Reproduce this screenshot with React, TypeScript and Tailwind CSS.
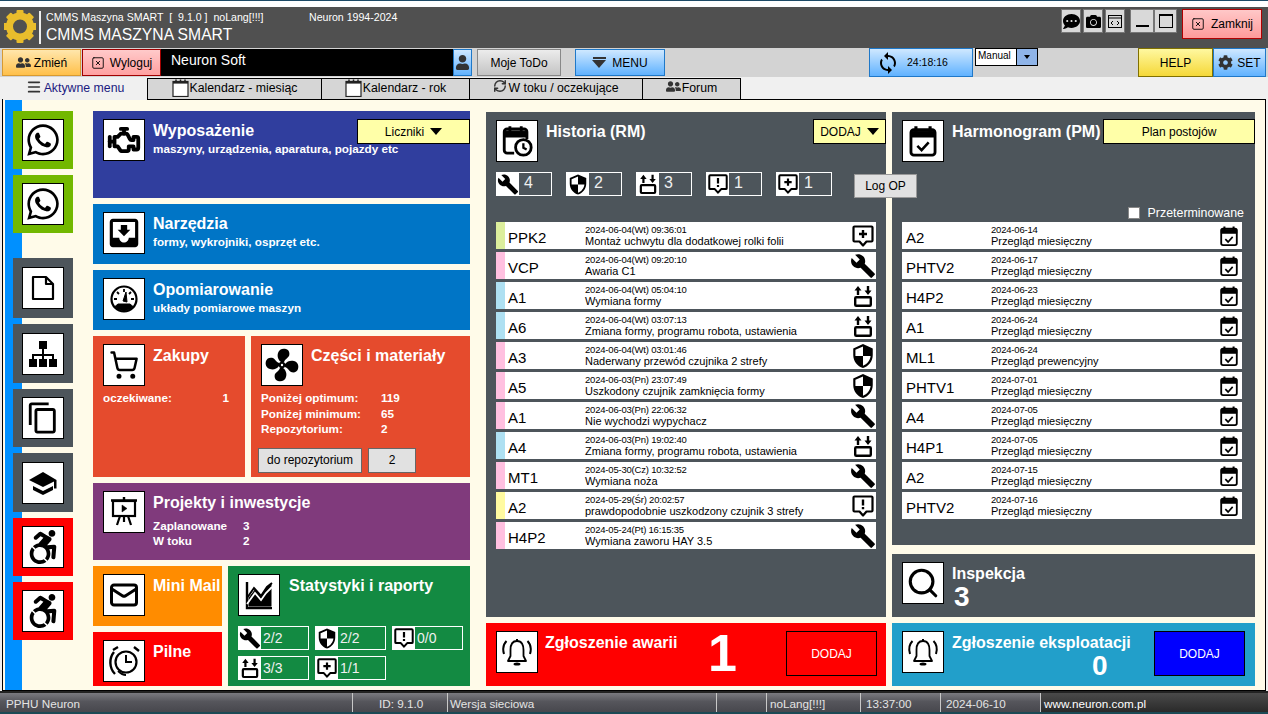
import type { ReactNode } from 'react';
import { Mail, Menu, RefreshCw, Search, ShoppingCart, SquareX } from 'lucide-react';
import { FaAccessibleIcon, FaCamera, FaCog, FaCommentDots, FaUser, FaUserFriends, FaWhatsapp } from 'react-icons/fa';
import { MdBuild, MdMoveToInbox, MdOutlineContentCopy, MdSecurity, MdSync } from 'react-icons/md';
import { TbEngine } from 'react-icons/tb';

const FormChange = ({ size = 24 }: { size?: number }) => (
  <svg width={size} height={size} viewBox="0 0 24 24">
    <path d="M7 2l3.500 4.500H8.200V11H5.800V6.500H3.500zM17 11l-3.500-4.500h2.300V2h2.400v4.500h2.300z" fill="#000" />
    <rect x="4.200" y="13.200" width="15.600" height="8.600" rx="1" fill="none" stroke="#000" strokeWidth="2.400" />
  </svg>
);

const Bubble = ({ size = 24, kind }: { size?: number; kind: 'alert' | 'plus' }) => (
  <svg width={size} height={size} viewBox="0 0 24 24" fill="none" stroke="#000" strokeWidth="2.200">
    <path d="M3.500 2.500h17a1 1 0 0 1 1 1v13a1 1 0 0 1-1 1H15.500L12 21.500 8.500 17.500H3.500a1 1 0 0 1-1-1v-13a1 1 0 0 1 1-1z" strokeLinejoin="round" />
    {kind === 'alert' ? (
      <path d="M12 5.500v6M12 13v2.200" strokeWidth="2.400" />
    ) : (
      <path d="M12 6v8M8 10h8" strokeWidth="2.400" />
    )}
  </svg>
);

const CalendarCheck = ({ size = 24 }: { size?: number }) => (
  <svg width={size} height={size} viewBox="0 0 24 24" fill="none" stroke="#000">
    <path d="M7 1.500v4M17 1.500v4" strokeWidth="2.200" />
    <rect x="3.500" y="4" width="17" height="18" rx="2" strokeWidth="2" />
    <path d="M3.500 5h17v4h-17z" fill="#000" strokeWidth="1" />
    <path d="M8 15.500l3 3 5-5.500" strokeWidth="1.800" />
  </svg>
);

const CalendarClock = ({ size = 32 }: { size?: number }) => (
  <svg width={size} height={size} viewBox="0 0 24 24" fill="none" stroke="#000">
    <path d="M7 1.500v4M15 1.500v4" strokeWidth="2" />
    <path d="M10 20.500H5a2 2 0 0 1-2-2V5.500a2 2 0 0 1 2-2h12a2 2 0 0 1 2 2v5" strokeWidth="2" />
    <path d="M3 5h16v4H3z" fill="#000" strokeWidth="1" />
    <circle cx="16.500" cy="16.500" r="5.500" fill="#fff" strokeWidth="2" />
    <path d="M16.500 13.500v3.300l2.300 1.200" strokeWidth="1.600" />
  </svg>
);

const TabCalendar = () => (
  <svg width={17} height={18} viewBox="0 0 17 18" fill="none" stroke="#222">
    <path d="M4 0.500v4M8.500 0.500v4M13 0.500v4" strokeWidth="1.500" />
    <rect x="1" y="2.500" width="15" height="15" fill="#fff" strokeWidth="1.200" />
    <path d="M1 3.500h15" strokeWidth="2.200" />
  </svg>
);

const Gauge = () => (
  <svg width={30} height={30} viewBox="0 0 30 30" fill="none" stroke="#000">
    <circle cx="15" cy="15" r="12.500" strokeWidth="2.200" />
    <path d="M6 22.500a12 12 0 0 0 18 0l-3-2.500H9z" fill="#000" strokeWidth="1" />
    <path d="M15 5v3M8 8l2 2M22 8l-2 2M5 15h3M25 15h-3" strokeWidth="1.800" />
    <path d="M14 17l3-9 1 10z" fill="#000" strokeWidth="1" />
  </svg>
);

const Easel = () => (
  <svg width={30} height={32} viewBox="0 0 30 32" fill="none" stroke="#000">
    <path d="M15 1v3M2 4.500h26" strokeWidth="2.400" />
    <rect x="4" y="5" width="22" height="15" strokeWidth="2.200" />
    <path d="M13 9l5 3.500-5 3.500z" fill="#000" strokeWidth="0.500" />
    <path d="M11 20l-3 9M19 20l3 9M15 20v6" strokeWidth="2.200" />
  </svg>
);

const AreaChartIcon = () => (
  <svg width={30} height={30} viewBox="0 0 30 30" fill="none" stroke="#000">
    <path d="M3 2v26h25" strokeWidth="2.400" />
    <path d="M5 26V18l6-8 6 7 5-8 5-5v22z" fill="#000" strokeWidth="1" />
    <path d="M3 24L11 13l6 7 5-7 6-6" stroke="#fff" strokeWidth="1.800" />
    <path d="M3 18L10 8l7 8 6-9 5-4" strokeWidth="2" />
  </svg>
);

const Cap = () => (
  <svg width={30} height={30} viewBox="0 0 30 30">
    <path d="M15 4L1 12l14 7 11-5.500v7h2.500V12z" fill="#000" />
    <path d="M5 18v4l10 5 10-5v-4l-10 5z" fill="#000" />
  </svg>
);

const PageIcon = () => (
  <svg width={26} height={26} viewBox="0 0 26 26" fill="none" stroke="#000" strokeWidth="2.200" strokeLinejoin="round">
    <path d="M3 2h13l7 7v15H3z" />
    <path d="M16 2v7h7" />
  </svg>
);

const TreeIcon = () => (
  <svg width={30} height={30} viewBox="0 0 30 30">
    <rect x="11" y="2" width="8" height="8" />
    <path d="M14 10h2v5h10v5h-2v-3H16v3h-2v-3H6v3H4v-5h10z" />
    <rect x="1" y="20" width="8" height="8" />
    <rect x="11" y="20" width="8" height="8" />
    <rect x="21" y="20" width="8" height="8" />
  </svg>
);

const FanIcon = () => (
  <svg width={36} height={36} viewBox="0 0 36 36">
    {[0, 90, 180, 270].map((a) => (
      <path key={a} transform={`rotate(${a} 18 18)`} d="M17 15c-3-2-4-6-3-9 1-4 5-5 8-4 3 1 4 4 3 7-1 2-4 3-5 6z" />
    ))}
    <circle cx="18" cy="18" r="3.200" />
    <circle cx="18" cy="18" r="1.200" fill="#fff" />
  </svg>
);

const ClockIcon = () => (
  <svg width={36} height={36} viewBox="0 0 36 36" fill="none" stroke="#000">
    <circle cx="20" cy="19" r="10.500" strokeWidth="2.200" />
    <path d="M20 12v7h6" strokeWidth="2" />
    <path d="M8 9C3 15 3 25 9 31" strokeWidth="2.400" />
    <path d="M12 28c2 2 5 4 8 4" strokeWidth="1.800" />
    <path d="M12 4L7 7M28 4l5 4" strokeWidth="2.400" />
  </svg>
);

const BellIcon = () => (
  <svg width={34} height={36} viewBox="0 0 34 36" fill="none" stroke="#000">
    <path d="M17 5v2" strokeWidth="2" />
    <path d="M17 7c-5 0-6.500 4.500-6.500 9v6L8 27h18l-2.500-5v-6c0-4.500-1.500-9-6.500-9z" strokeWidth="1.800" strokeLinejoin="round" />
    <ellipse cx="17" cy="30" rx="3.500" ry="1.600" fill="#000" stroke="none" />
    <path d="M6.500 7C3.500 10 2.500 15 4 20M27.500 7c3 3 4 8 2.500 13" strokeWidth="2" />
  </svg>
);

const LogoGear = () => (
  <svg width={32} height={35} viewBox="0 0 32 35" fill="#e9bd2c">
    {[0, 45, 90, 135, 180, 225, 270, 315].map((a) => (
      <rect key={a} x="12.500" y="1" width="7" height="8" rx="1" transform={`rotate(${a} 16 17.500)`} />
    ))}
    <circle cx="16" cy="17.500" r="10.500" fill="none" stroke="#e9bd2c" strokeWidth="7" />
  </svg>
);

const IconBox = ({ children }: { children: ReactNode }) => (
  <div className="flex h-[42px] w-[42px] shrink-0 items-center justify-center border border-black bg-white text-black">
    {children}
  </div>
);

const SideTile = ({ color, h, children }: { color: string; h: string; children: ReactNode }) => (
  <div className={`flex w-[60px] items-center justify-center ${color} ${h}`}>
    <IconBox>{children}</IconBox>
  </div>
);

const Sidebar = () => (
  <div className="flex w-[90px] shrink-0 flex-col bg-[linear-gradient(90deg,transparent_2px,#0090ff_2px,#0090ff_19px,transparent_19px)] pl-[10px] pt-[11px]">
    <SideTile color="bg-[#72b800]" h="h-[58px]"><FaWhatsapp size={36} /></SideTile>
    <div className="mt-[6px]"><SideTile color="bg-[#72b800]" h="h-[58px]"><FaWhatsapp size={36} /></SideTile></div>
    <div className="mt-[25px] flex flex-col gap-[6px]">
      <SideTile color="bg-[#4d555b]" h="h-[60px]"><PageIcon /></SideTile>
      <SideTile color="bg-[#4d555b]" h="h-[59px]"><TreeIcon /></SideTile>
      <SideTile color="bg-[#4d555b]" h="h-[58px]"><MdOutlineContentCopy size={34} /></SideTile>
      <SideTile color="bg-[#4d555b]" h="h-[59px]"><Cap /></SideTile>
      <SideTile color="bg-[#ff0000]" h="h-[58px]"><FaAccessibleIcon size={34} /></SideTile>
      <SideTile color="bg-[#ff0000]" h="h-[58px]"><FaAccessibleIcon size={34} /></SideTile>
    </div>
  </div>
);

const YellowButton = ({ w, children }: { w: string; children: ReactNode }) => (
  <button className={`flex h-[25px] items-center justify-center gap-[6px] border border-black bg-[#ffffa8] text-[12px] text-black ${w}`}>
    {children}
  </button>
);

const DownCaret = () => <span className="h-0 w-0 border-x-[6px] border-t-[7px] border-x-transparent border-t-black" />;

const Chip = ({ icon, value, w, big }: { icon: ReactNode; value: string; w: string; big?: boolean }) => (
  <div className={`flex h-[24px] border border-white ${w}`}>
    <div className="flex w-[22px] shrink-0 items-center justify-center bg-white text-black">{icon}</div>
    <span className={big ? 'pl-[5px] text-[16px] leading-[20px] text-[#f0f0f0]' : 'pl-[2px] text-[14px] leading-[22px] text-[#f0f0f0]'}>{value}</span>
  </div>
);

const LeftColumn = () => (
  <div className="flex w-[377px] shrink-0 flex-col gap-[6px] pt-[11px] text-white">
    <div className="flex h-[87px] bg-[#303e9e] pl-[10px] pt-[8px]">
      <IconBox><TbEngine size={38} strokeWidth={2.400} /></IconBox>
      <div className="ml-[8px] w-[204px] whitespace-nowrap pt-[3px]">
        <div className="text-[16px] font-bold leading-[18px]">Wyposażenie</div>
        <div className="text-[11.700px] font-bold leading-[18px]">maszyny, urządzenia, aparatura, pojazdy etc</div>
      </div>
      <div className="ml-auto"><YellowButton w="w-[113px]">Liczniki <DownCaret /></YellowButton></div>
    </div>
    {[
      { title: 'Narzędzia', sub: 'formy, wykrojniki, osprzęt etc.', icon: <MdMoveToInbox size={38} /> },
      { title: 'Opomiarowanie', sub: 'układy pomiarowe maszyn', icon: <Gauge /> },
    ].map((c) => (
      <div key={c.title} className="flex h-[60px] bg-[#0075c6] pl-[10px] pt-[8px]">
        <IconBox>{c.icon}</IconBox>
        <div className="ml-[8px] pt-[3px]">
          <div className="text-[16px] font-bold leading-[18px]">{c.title}</div>
          <div className="text-[11.700px] font-bold leading-[18px]">{c.sub}</div>
        </div>
      </div>
    ))}
    <div className="flex h-[141px] gap-[6px]">
      <div className="w-[152px] bg-[#e54b2d] pl-[10px] pt-[8px]">
        <div className="flex">
          <IconBox><ShoppingCart size={30} strokeWidth={2} /></IconBox>
          <div className="ml-[8px] pt-[3px] text-[16px] font-bold leading-[18px]">Zakupy</div>
        </div>
        <div className="mt-[4px] flex w-[126px] justify-between text-[11.700px] font-bold leading-[16px]">
          <span>oczekiwane:</span><span>1</span>
        </div>
      </div>
      <div className="flex-1 bg-[#e54b2d] pl-[10px] pt-[8px]">
        <div className="flex">
          <IconBox><FanIcon /></IconBox>
          <div className="ml-[8px] pt-[3px] text-[16px] font-bold leading-[18px]">Części i materiały</div>
        </div>
        <div className="mt-[4px] grid grid-cols-[120px_1fr] text-[11.700px] font-bold leading-[15.500px]">
          <span>Poniżej optimum:</span><span>119</span>
          <span>Poniżej minimum:</span><span>65</span>
          <span>Repozytorium:</span><span>2</span>
        </div>
        <div className="-ml-[3px] mt-[11px] flex gap-[6px] text-[12px] text-black">
          <button className="h-[25px] w-[104px] border border-[#666] bg-[#e1e1e1]">do repozytorium</button>
          <button className="h-[25px] w-[48px] border border-[#666] bg-[#e1e1e1]">2</button>
        </div>
      </div>
    </div>
    <div className="flex h-[77px] bg-[#803a7c] pl-[10px] pt-[8px]">
      <IconBox><Easel /></IconBox>
      <div className="ml-[8px] pt-[3px]">
        <div className="text-[16px] font-bold leading-[18px]">Projekty i inwestycje</div>
        <div className="mt-[6px] grid grid-cols-[90px_1fr] text-[11.700px] font-bold leading-[15px]">
          <span>Zaplanowane</span><span>3</span>
          <span>W toku</span><span>2</span>
        </div>
      </div>
    </div>
    <div className="flex h-[120px] gap-[6px]">
      <div className="flex w-[129px] flex-col gap-[6px]">
        <div className="flex h-[60px] bg-[#ff8c00] pl-[10px] pt-[8px]">
          <IconBox><Mail size={30} strokeWidth={2.400} /></IconBox>
          <div className="ml-[8px] whitespace-nowrap pt-[3px] text-[16px] font-bold leading-[18px]">Mini Mail</div>
        </div>
        <div className="flex h-[54px] bg-[#ff0000] pl-[10px] pt-[8px]">
          <IconBox><ClockIcon /></IconBox>
          <div className="ml-[8px] pt-[3px] text-[16px] font-bold leading-[18px]">Pilne</div>
        </div>
      </div>
      <div className="flex-1 bg-[#138a42] pl-[10px] pt-[8px]">
        <div className="flex">
          <IconBox><AreaChartIcon /></IconBox>
          <div className="ml-[9px] pt-[3px] text-[16px] font-bold leading-[18px]">Statystyki i raporty</div>
        </div>
        <div className="mt-[10px] grid w-[225px] grid-cols-3 gap-x-[6px] gap-y-[6px]">
          <Chip w="w-[71px]" icon={<MdBuild size={23} />} value="2/2" />
          <Chip w="w-[71px]" icon={<MdSecurity size={23} />} value="2/2" />
          <Chip w="w-[71px]" icon={<Bubble size={22} kind="alert" />} value="0/0" />
          <Chip w="w-[71px]" icon={<FormChange size={22} />} value="3/3" />
          <Chip w="w-[71px]" icon={<Bubble size={22} kind="plus" />} value="1/1" />
        </div>
      </div>
    </div>
  </div>
);

type Kind = 'plus' | 'wrench' | 'form' | 'shield' | 'alert';

const history: { code: string; color: string; date: string; text: string; kind: Kind }[] = [
  { code: 'PPK2', color: 'bg-[#dcee9c]', date: '2024-06-04(Wt) 09:36:01', text: 'Montaż uchwytu dla dodatkowej rolki folii', kind: 'plus' },
  { code: 'VCP', color: 'bg-[#ffc0e0]', date: '2024-06-04(Wt) 09:20:10', text: 'Awaria C1', kind: 'wrench' },
  { code: 'A1', color: 'bg-[#aee0f2]', date: '2024-06-04(Wt) 05:04:10', text: 'Wymiana formy', kind: 'form' },
  { code: 'A6', color: 'bg-[#aee0f2]', date: '2024-06-04(Wt) 03:07:13', text: 'Zmiana formy, programu robota, ustawienia', kind: 'form' },
  { code: 'A3', color: 'bg-[#ffc0e0]', date: '2024-06-04(Wt) 03:01:46', text: 'Naderwany przewód czujnika 2 strefy', kind: 'shield' },
  { code: 'A5', color: 'bg-[#ffc0e0]', date: '2024-06-03(Pn) 23:07:49', text: 'Uszkodony czujnik zamknięcia formy', kind: 'shield' },
  { code: 'A1', color: 'bg-[#ffc0e0]', date: '2024-06-03(Pn) 22:06:32', text: 'Nie wychodzi wypychacz', kind: 'wrench' },
  { code: 'A4', color: 'bg-[#aee0f2]', date: '2024-06-03(Pn) 19:02:40', text: 'Zmiana formy, programu robota, ustawienia', kind: 'form' },
  { code: 'MT1', color: 'bg-[#ffc0e0]', date: '2024-05-30(Cz) 10:32:52', text: 'Wymiana noża', kind: 'wrench' },
  { code: 'A2', color: 'bg-[#fffaa0]', date: '2024-05-29(Śr) 20:02:57', text: 'prawdopodobnie uszkodzony czujnik 3 strefy', kind: 'alert' },
  { code: 'H4P2', color: 'bg-[#ffc0e0]', date: '2024-05-24(Pt) 16:15:35', text: 'Wymiana zaworu HAY 3.5', kind: 'wrench' },
];

const schedule = [
  { code: 'A2', date: '2024-06-14', text: 'Przegląd miesięczny' },
  { code: 'PHTV2', date: '2024-06-17', text: 'Przegląd miesięczny' },
  { code: 'H4P2', date: '2024-06-23', text: 'Przegląd miesięczny' },
  { code: 'A1', date: '2024-06-24', text: 'Przegląd miesięczny' },
  { code: 'ML1', date: '2024-06-24', text: 'Przegląd prewencyjny' },
  { code: 'PHTV1', date: '2024-07-01', text: 'Przegląd miesięczny' },
  { code: 'A4', date: '2024-07-05', text: 'Przegląd miesięczny' },
  { code: 'H4P1', date: '2024-07-05', text: 'Przegląd miesięczny' },
  { code: 'A2', date: '2024-07-15', text: 'Przegląd miesięczny' },
  { code: 'PHTV2', date: '2024-07-16', text: 'Przegląd miesięczny' },
];

const KindIcon = ({ kind }: { kind: Kind }) => {
  if (kind === 'wrench') return <MdBuild size={26} />;
  if (kind === 'shield') return <MdSecurity size={26} />;
  if (kind === 'form') return <FormChange size={24} />;
  return <Bubble size={24} kind={kind} />;
};

const Row = ({ code, color, date, text, icon, textX }: { code: string; color?: string; date: string; text: string; icon: ReactNode; textX: string }) => (
  <div className="flex h-[27px] bg-white text-black">
    {color && <div className={`w-[9px] shrink-0 ${color}`} />}
    <div className={`shrink-0 pl-[3px] pt-[5px] text-[15px] leading-[22px] ${textX}`}>{code}</div>
    <div className="flex-1 pt-[2px]">
      <div className="text-[9.500px] leading-[11px] tracking-[-0.2px]">{date}</div>
      <div className="text-[11px] leading-[12px]">{text}</div>
    </div>
    <div className="flex w-[26px] shrink-0 items-center justify-center">{icon}</div>
  </div>
);

const HistoryPanel = () => (
  <div className="relative flex h-[505px] flex-col bg-[#4d555b] pl-[10px] pr-[10px] pt-[8px] text-white">
    <div className="flex">
      <IconBox><CalendarClock size={34} /></IconBox>
      <div className="ml-[8px] pt-[3px] text-[16px] font-bold leading-[18px]">Historia (RM)</div>
      <div className="-mr-[10px] -mt-[1px] ml-auto"><YellowButton w="w-[73px]">DODAJ <DownCaret /></YellowButton></div>
    </div>
    <div className="mt-[10px] flex gap-[14px]">
      <Chip big w="w-[56px]" icon={<MdBuild size={23} />} value="4" />
      <Chip big w="w-[56px]" icon={<MdSecurity size={23} />} value="2" />
      <Chip big w="w-[56px]" icon={<FormChange size={22} />} value="3" />
      <Chip big w="w-[56px]" icon={<Bubble size={22} kind="alert" />} value="1" />
      <Chip big w="w-[56px]" icon={<Bubble size={22} kind="plus" />} value="1" />
    </div>
    <button className="absolute left-[368px] top-[62px] h-[24px] w-[63px] border border-[#999] bg-[#e1e1e1] text-[12px] text-black">Log OP</button>
    <div className="mt-[26px] flex flex-col gap-[3px]">
      {history.map((r) => (
        <Row key={r.date} code={r.code} color={r.color} date={r.date} text={r.text} textX="w-[80px]" icon={<KindIcon kind={r.kind} />} />
      ))}
    </div>
  </div>
);

const SchedulePanel = () => (
  <div className="flex h-[433px] flex-col bg-[#4d555b] pl-[10px] pt-[8px] text-white">
    <div className="flex">
      <IconBox><CalendarCheck size={34} /></IconBox>
      <div className="ml-[8px] pt-[3px] text-[16px] font-bold leading-[18px]">Harmonogram (PM)</div>
      <div className="-mt-[1px] ml-auto"><YellowButton w="w-[152px]">Plan postojów</YellowButton></div>
    </div>
    <div className="mr-[11px] mt-[45px] flex h-[12px] items-center justify-end gap-[8px] text-[12.400px]">
      <span className="h-[12px] w-[12px] border border-[#888] bg-white" />
      <span>Przeterminowane</span>
    </div>
    <div className="mr-[13px] mt-[3px] flex flex-col gap-[3px]">
      {schedule.map((r) => (
        <Row key={r.code + r.date} code={r.code} date={r.date} text={r.text} textX="w-[89px] pl-[4px]" icon={<CalendarCheck size={22} />} />
      ))}
    </div>
  </div>
);

const DodajBox = ({ color }: { color: string }) => (
  <button className={`h-[45px] w-[91px] border border-black text-[12px] text-white ${color}`}>DODAJ</button>
);

const Content = () => (
  <div className="flex flex-1 bg-[#fffbe9]">
    <Sidebar />
    <LeftColumn />
    <div className="ml-[16px] flex w-[400px] shrink-0 flex-col gap-[6px] pt-[12px]">
      <HistoryPanel />
      <div className="flex h-[63px] bg-[#ff0000] pl-[10px] pt-[8px] text-white">
        <IconBox><BellIcon /></IconBox>
        <div className="ml-[7px] w-[163px] pt-[3px] text-[16px] font-bold leading-[18px]">Zgłoszenie awarii</div>
        <div className="w-[78px] text-[52px] font-bold leading-[44px]">1</div>
        <DodajBox color="bg-[#ff0000]" />
      </div>
    </div>
    <div className="ml-[6px] flex w-[363px] shrink-0 flex-col pt-[12px]">
      <SchedulePanel />
      <div className="mt-[9px] flex h-[63px] bg-[#4d555b] pl-[10px] pt-[8px] text-white">
        <IconBox><Search size={34} strokeWidth={2.200} /></IconBox>
        <div className="ml-[8px] pt-[2px]">
          <div className="text-[16px] font-bold leading-[20px]">Inspekcja</div>
          <div className="pl-[2px] text-[28px] font-bold leading-[25px]">3</div>
        </div>
      </div>
      <div className="mt-[6px] flex h-[63px] bg-[#229fca] pl-[10px] pt-[8px] text-white">
        <IconBox><BellIcon /></IconBox>
        <div className="ml-[8px] w-[202px] pt-[3px]">
          <div className="text-[16px] font-bold leading-[18px]">Zgłoszenie eksploatacji</div>
          <div className="pl-[140px] text-[28px] font-bold leading-[27px]">0</div>
        </div>
        <DodajBox color="bg-[#0000ff]" />
      </div>
    </div>
  </div>
);

const TitleIcon = ({ children, w = 'w-[20px]' }: { children: ReactNode; w?: string }) => (
  <div className={`flex h-[24px] items-center justify-center border border-[#777] bg-[#d9d9d9] text-black ${w}`}>{children}</div>
);

const TitleBar = () => (
  <div className="flex h-[41px] bg-[#505050] text-white">
    <div className="ml-[4px] mt-[2px]"><LogoGear /></div>
    <div className="ml-[3px] mt-[4px] h-[33px] w-[2px] bg-[#eee]" />
    <div className="ml-[5px] pt-[4px]">
      <div className="flex text-[10.600px] leading-[12px]">
        <span className="w-[263px] whitespace-pre">CMMS Maszyna SMART  [  9.1.0 ]  noLang[!!!]</span>
        <span>Neuron 1994-2024</span>
      </div>
      <div className="mt-[3px] text-[15.700px] leading-[18px]">CMMS MASZYNA SMART</div>
    </div>
    <div className="ml-auto mr-[6px] mt-[2px] flex items-start">
      <div className="flex gap-[2px]">
        <TitleIcon><FaCommentDots size={17} /></TitleIcon>
        <TitleIcon><FaCamera size={15} /></TitleIcon>
        <TitleIcon>
          <svg width="14" height="13" viewBox="0 0 14 13" fill="none" stroke="#000">
            <rect x="0.500" y="0.500" width="13" height="12" />
            <path d="M0.500 3h13M5 6L3 8l2 2M9 6l2 2-2 2" />
          </svg>
        </TitleIcon>
      </div>
      <div className="ml-[5px] flex">
        <TitleIcon w="w-[24px]"><span className="mt-[10px] h-[2px] w-[13px] bg-black" /></TitleIcon>
        <TitleIcon w="w-[23px]"><span className="h-[14px] w-[14px] border border-t-2 border-black" /></TitleIcon>
      </div>
      <button className="ml-[5px] flex h-[30px] w-[80px] items-center justify-center gap-[6px] border border-[#b00000] bg-[linear-gradient(#ffc8c8,#ff9a9a)] text-[12px] text-black">
        <SquareX size={14} strokeWidth={1.500} /> Zamknij
      </button>
    </div>
  </div>
);

const gradBlue = 'border border-[#1f78c8] bg-[linear-gradient(#cfe8ff,#60b2ff)]';

const Toolbar = () => (
  <div className="flex h-[29px] bg-[#d3d3d3] text-[12px] text-black">
    <button className="ml-[2px] mt-[1px] flex h-[27px] w-[79px] items-center justify-center gap-[3px] border border-[#d89a30] bg-[linear-gradient(#ffe6ac,#ffc04a)]">
      <FaUserFriends size={15} color="#333" /> Zmień
    </button>
    <button className="ml-[1px] mt-[1px] flex h-[27px] w-[79px] items-center justify-center gap-[5px] border border-[#a00000] bg-[linear-gradient(#ffcaca,#ffa0a0)]">
      <SquareX size={14} strokeWidth={1.500} /> Wyloguj
    </button>
    <div className="mt-[1px] h-[27px] w-[292px] bg-black pl-[10px] text-[14px] leading-[22px] text-white">Neuron Soft</div>
    <div className={`mt-[1px] flex h-[27px] w-[19px] items-center justify-center ${gradBlue}`}><FaUser size={15} color="#333" /></div>
    <button className="ml-[5px] mt-[1px] h-[27px] w-[84px] border border-[#888] bg-[linear-gradient(#ececec,#c4c4c4)]">Moje ToDo</button>
    <button className={`ml-[14px] mt-[1px] flex h-[27px] w-[90px] items-center justify-center gap-[6px] ${gradBlue}`}>
      <span className="flex flex-col items-center gap-[1px]">
        <span className="h-[2px] w-[13px] bg-[#333]" />
        <span className="h-0 w-0 border-x-[7px] border-t-[8px] border-x-transparent border-t-[#333]" />
      </span>
      MENU
    </button>
    <button className={`ml-[204px] flex h-[29px] w-[104px] items-center gap-[7px] pl-[6px] text-[10.500px] ${gradBlue}`}>
      <MdSync size={24} /> 24:18:16
    </button>
    <div className="ml-[2px] flex h-[18px] w-[63px] border border-black bg-white text-[10px] leading-[14px]">
      <span className="flex-1 pl-[2px]">Manual</span>
      <span className="flex w-[21px] items-center justify-center border-l border-black bg-[#8fb4e8]">
        <span className="h-0 w-0 border-x-[3px] border-t-[4px] border-x-transparent border-t-black" />
      </span>
    </div>
    <button className="ml-[100px] h-[29px] w-[75px] border border-[#807000] bg-[linear-gradient(#fff8a0,#f5d838)]">HELP</button>
    <button className={`flex h-[29px] w-[53px] items-center justify-center gap-[4px] ${gradBlue}`}>
      <FaCog size={15} color="#333" /> SET
    </button>
  </div>
);

const tabs = [
  { label: 'Aktywne menu', w: 'w-[145px]', icon: <Menu size={16} strokeWidth={2.500} color="#333" /> },
  { label: 'Kalendarz - miesiąc', w: 'w-[174px]', icon: <TabCalendar /> },
  { label: 'Kalendarz - rok', w: 'w-[148px]', icon: <TabCalendar /> },
  { label: 'W toku / oczekujące', w: 'w-[173px]', icon: <RefreshCw size={14} strokeWidth={2.500} color="#333" /> },
  { label: 'Forum', w: 'w-[98px]', icon: <FaUserFriends size={15} color="#333" /> },
];

const Tabs = () => (
  <div className="z-10 -mb-[1px] flex h-[23px] pl-[3px] pt-[1px] text-[12.300px] leading-[18px]">
    {tabs.map((t, i) => (
      <div
        key={t.label}
        className={
          i === 0
            ? `flex items-start justify-center gap-[2px] border-r border-black bg-[#f0f0f0] pt-[1px] text-[#1a1a80] ${t.w}`
            : `flex items-start justify-center gap-[1px] border-y border-r border-black bg-[#d6d6d6] text-black ${t.w}`
        }
      >
        {t.icon}
        {t.label}
      </div>
    ))}
  </div>
);

const statusCells = [
  { text: 'PPHU Neuron', w: 'w-[353px] pl-[6px]' },
  { text: 'ID: 9.1.0', w: 'w-[95px] pl-[26px]' },
  { text: 'Wersja sieciowa', w: 'w-[269px] pl-[2px]' },
  { text: '', w: 'w-[50px]' },
  { text: 'noLang[!!!]', w: 'w-[94px] pl-[3px]' },
  { text: '13:37:00', w: 'w-[80px] pl-[5px]' },
  { text: '2024-06-10', w: 'w-[100px] pl-[5px]' },
];

const StatusBar = () => (
  <div className="flex h-[19px] text-[11.700px] leading-[21px] text-[#e4e4e4]">
    <div className="flex bg-[linear-gradient(#7a7a80,#56565c_45%,#47474d)]">
      {statusCells.map((c, i) => (
        <div key={i} className={`border-r border-[#c8c8c8] ${c.w}`}>{c.text}</div>
      ))}
    </div>
    <div className="flex-1 bg-[linear-gradient(#4a4a4a,#2a2a2a)] pl-[3px] text-white">www.neuron.com.pl</div>
  </div>
);

export default function App() {
  return (
    <div className="flex h-[714px] w-[1268px] flex-col overflow-hidden border-t border-[#1c4a66] bg-[#f0f0f0] font-['Liberation_Sans',Arial,sans-serif]">
      <div className="h-[6px] bg-white" />
      <TitleBar />
      <Toolbar />
      <Tabs />
      <div className="mx-[2px] flex h-[592px] border border-black">
        <Content />
      </div>
      <div className="h-[2px] bg-[#222]" />
      <StatusBar />
      <div className="flex-1 bg-[#1c4a55]" />
    </div>
  );
}
